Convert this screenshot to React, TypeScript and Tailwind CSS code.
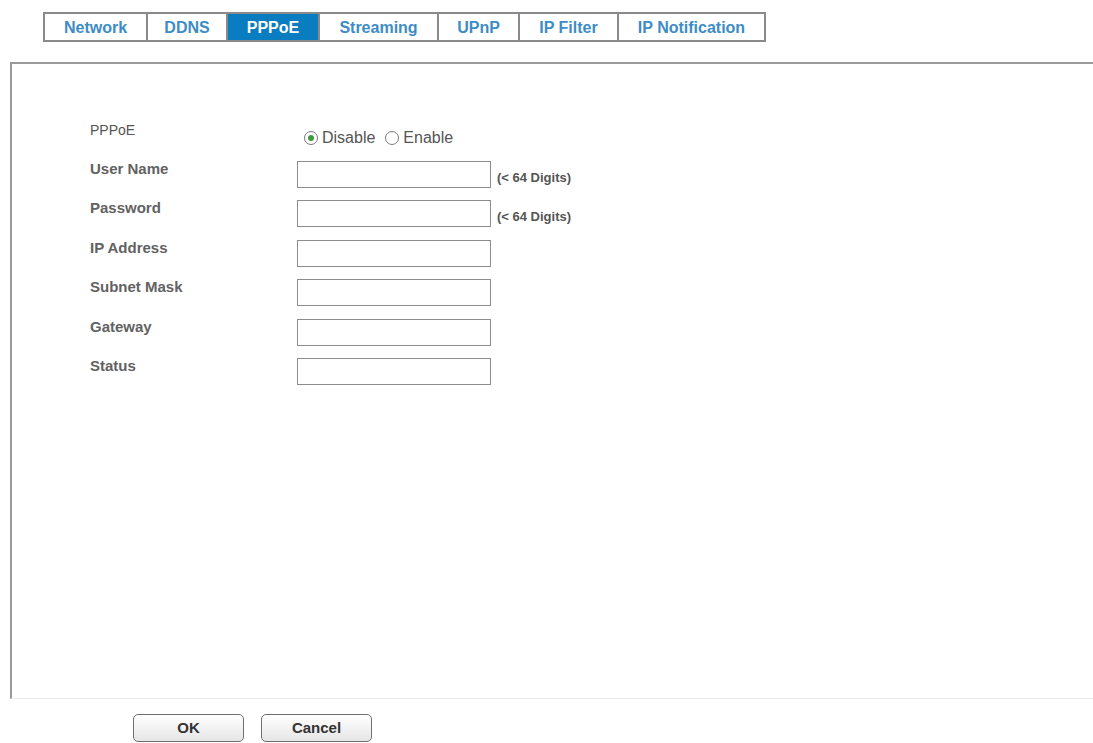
import React from "react";

const tabs = [
  { label: "Network", w: "w-[101px]" },
  { label: "DDNS", w: "w-[80px]" },
  { label: "PPPoE", w: "w-[92px]", active: true },
  { label: "Streaming", w: "w-[119px]" },
  { label: "UPnP", w: "w-[81px]" },
  { label: "IP Filter", w: "w-[99px]" },
  { label: "IP Notification", w: "w-[147px]" },
];

const fields = [
  { label: "User Name", hint: true },
  { label: "Password", hint: true },
  { label: "IP Address" },
  { label: "Subnet Mask" },
  { label: "Gateway" },
  { label: "Status" },
];

function Radio({ checked, label }: { checked?: boolean; label: string }) {
  return (
    <label className="flex items-center gap-[4px]">
      <span className="w-[14px] h-[14px] rounded-full border border-[#7a7a7a] bg-white flex items-center justify-center">
        {checked && <span className="w-[6px] h-[6px] rounded-full bg-[#3f9a3f]" />}
      </span>
      <span className="text-[16px] leading-[18px] text-[#555]">{label}</span>
    </label>
  );
}

export default function App() {
  return (
    <div className="w-[1093px] h-[743px] bg-white overflow-hidden font-['Liberation_Sans',Arial,sans-serif]">
      {/* Tab strip */}
      <div className="pt-[12px] pl-[43px]">
        <div className="flex h-[30px] border-2 border-[#8a8a8a] w-max">
          {tabs.map((t, i) => (
            <div
              key={t.label}
              className={`${t.w} flex items-center justify-center pt-[1px] text-[16px] font-bold ${
                i > 0 ? "border-l-2 border-[#8a8a8a]" : ""
              } ${t.active ? "bg-[#0a7cc0] text-white" : "text-[#3d8cc6]"}`}
            >
              {t.label}
            </div>
          ))}
        </div>
      </div>

      {/* Settings panel */}
      <div className="mt-[20px] ml-[10px] h-[637px] border-t-2 border-l-2 border-[#9a9a9a] border-b border-b-[#ececec]">
        <div className="pt-[57px] pl-[78px] flex flex-col">
          <div className="flex items-start h-[39.5px]">
            <div className="w-[207px] text-[14px] leading-[18px] text-[#555]">PPPoE</div>
            <div className="flex gap-[10px] mt-[8px] ml-[7px]">
              <Radio checked label="Disable" />
              <Radio label="Enable" />
            </div>
          </div>
          {fields.map((f) => (
            <div key={f.label} className="flex h-[39.5px]">
              <div className="w-[207px] text-[15px] font-bold leading-[16px] text-[#626262]">
                {f.label}
              </div>
              <div className="w-[194px] h-[27px] border border-[#8c8c8c] bg-white" />
              {f.hint && (
                <div className="ml-[6px] mt-[9px] text-[13px] font-bold leading-[16px] text-[#555]">
                  (&lt; 64 Digits)
                </div>
              )}
            </div>
          ))}
        </div>
      </div>

      {/* Actions */}
      <div className="mt-[15px] pl-[133px] flex gap-[17px]">
        {["OK", "Cancel"].map((b) => (
          <button
            key={b}
            className="w-[111px] h-[28px] rounded-[5px] border border-[#6f6f6f] bg-gradient-to-b from-white to-[#e6e6e6] text-[15px] font-bold text-[#333]"
          >
            {b}
          </button>
        ))}
      </div>
    </div>
  );
}
